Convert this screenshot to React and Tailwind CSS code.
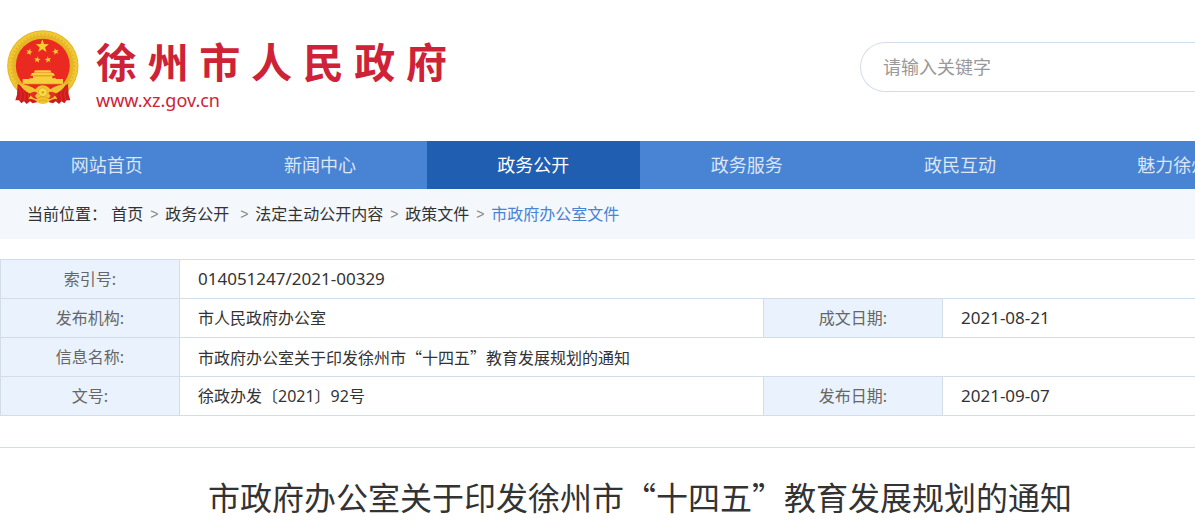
const navItems = ['网站首页', '新闻中心', '政务公开', '政务服务', '政民互动', '魅力徐州'];

function Star({ x, y, size, turn = 0 }) {
  return (
    <path
      d="M0 -10 L2.4 -3.2 L9.5 -3.1 L3.9 1.3 L5.9 8.1 L0 4.1 L-5.9 8.1 L-3.9 1.3 L-9.5 -3.1 L-2.4 -3.2 Z"
      transform={`translate(${x} ${y}) rotate(${turn}) scale(${size})`}
      fill="#f5cf2f"
    />
  );
}

function Emblem() {
  return (
    <svg viewBox="21 28 216 228" className="h-[76px] w-[72px] shrink-0" role="img" aria-label="国徽">
      <circle cx="128.5" cy="136" r="107" fill="#e6b526" />
      <circle cx="128.5" cy="136" r="98" fill="none" stroke="#f0c836" strokeWidth="12" />
      <circle cx="128.5" cy="136" r="95" fill="none" stroke="#e0ae22" strokeWidth="5" strokeDasharray="4 7" />
      <circle cx="128.5" cy="135" r="81" fill="#ea2a20" />
      <Star x={127} y={77} size={2.1} />
      <Star x={88} y={94} size={1.05} turn={15} />
      <Star x={167} y={93} size={1.05} turn={-15} />
      <Star x={112} y={117} size={1.05} turn={8} />
      <Star x={144} y={117} size={1.05} turn={-8} />
      <g fill="#f6d03c">
        <path d="M105 149 H151 L155 156 H101 Z" />
        <path d="M96 157 H160 L165 165 H91 Z" />
        <path d="M99 166 H157 V173 H168 V190 H88 V173 H99 Z" />
        <path d="M68 175 H189 V190 H68 Z" />
      </g>
      <path d="M66 190 H191 M103 166 H154" stroke="#d69b16" strokeWidth="2" />
      <path d="M53 190 L96 210 L112 244 L98 248 L90 242 L80 250 L72 242 L64 248 L57 239 L46 239 L51 222 Z" fill="#cf1a1e" />
      <path d="M204 190 L161 210 L145 244 L159 248 L167 242 L177 250 L185 242 L193 248 L200 239 L211 239 L206 222 Z" fill="#cf1a1e" />
      <path d="M57 200 L64 218 L60 239 M69 206 L75 222 L72 241 M84 213 L88 240 M200 200 L193 218 L197 239 M188 206 L182 222 L185 241 M173 213 L169 240" stroke="#e83a2e" strokeWidth="2" fill="none" />
      <path d="M58 190 Q88 192 106 206 Q115 194 128 194 Q141 194 151 206 Q169 192 199 190 Q184 214 162 220 L172 234 Q152 234 145 245 Q128 255 112 245 Q105 234 85 234 L95 220 Q73 214 58 190 Z" fill="#f0c32f" />
      <path d="M88 219 Q104 209 112 217 L105 226 L112 235 Q99 236 88 219 Z M169 219 Q153 209 145 217 L152 226 L145 235 Q158 236 169 219 Z" fill="#e03023" />
      <circle cx="128.5" cy="215" r="13" fill="#f9d94d" stroke="#d9a51f" strokeWidth="3" strokeDasharray="5 3" />
      <circle cx="128.5" cy="215" r="4" fill="#dba524" />
      <path d="M112 234 Q128 222 145 234 M116 243 Q128 233 141 243" stroke="#d39b1c" strokeWidth="2" fill="none" />
    </svg>
  );
}

function Separator() {
  return <span aria-hidden="true" className="w-2 font-['Liberation_Sans'] text-sm text-[#888888]">&gt;</span>;
}

const label = 'border border-[#d3dde8] bg-[#eaf3fd] text-center font-normal text-[#666666]';
const value = 'border border-[#d3dde8] px-[18px]';

export default function App() {
  return (
    <div className="overflow-hidden bg-white font-['Noto_Sans','Noto_Sans_CJK_SC',sans-serif] text-base text-[#333333]" lang="zh-CN">
      <div className="min-w-[1280px]">
        <header className="flex h-[141px] items-start justify-between pl-[7px]">
          <a href="#home" className="flex items-start gap-[17px] pt-[30px] text-[#ce2237]">
            <Emblem />
            <span className="flex flex-col pt-2">
              <span className="text-[41px] leading-[48px] font-bold whitespace-nowrap">徐 州 市 人 民 政 府</span>
              <span className="text-lg leading-7">www.xz.gov.cn</span>
            </span>
          </a>
          <form className="pt-[42px]">
            <input
              type="search"
              aria-label="请输入关键字"
              placeholder="请输入关键字"
              className="block h-[50px] w-[420px] rounded-l-full border border-r-0 border-[#d3dde8] px-[22px] text-lg outline-none placeholder:text-[#999999]"
            />
          </form>
        </header>

        <nav className="grid grid-cols-6 bg-[#4983d3] text-center text-lg leading-[48px]">
          {navItems.map((item) => (
            <a
              key={item}
              href="#nav"
              className={item === '政务公开' ? 'bg-[#205eb2] text-white' : 'text-[#dbe6f6]'}
            >
              {item}
            </a>
          ))}
        </nav>

        <nav aria-label="当前位置" className="flex h-[50px] items-center gap-[7px] bg-[#f4f8fd] pl-[27px]">
          <span>当前位置： <a href="#home">首页</a></span>
          <Separator />
          <a href="#open" className="pr-1">政务公开</a>
          <Separator />
          <a href="#content">法定主动公开内容</a>
          <Separator />
          <a href="#policy">政策文件</a>
          <Separator />
          <a href="#files" className="text-[#4983d3]">市政府办公室文件</a>
        </nav>

        <main className="pt-5">
          <table className="w-full table-fixed border-collapse leading-[38px]">
            <colgroup>
              <col className="w-[179px]" />
              <col />
              <col className="w-[179px]" />
              <col className="w-[337px]" />
            </colgroup>
            <tbody className="text-left">
              <tr>
                <th scope="row" className={label}>索引号:</th>
                <td colSpan={3} className={`${value} text-[17px]`}>014051247/2021-00329</td>
              </tr>
              <tr>
                <th scope="row" className={label}>发布机构:</th>
                <td className={value}>市人民政府办公室</td>
                <th scope="row" className={label}>成文日期:</th>
                <td className={`${value} text-[17px]`}>2021-08-21</td>
              </tr>
              <tr>
                <th scope="row" className={label}>信息名称:</th>
                <td colSpan={3} className={`${value} font-['Noto_Sans_CJK_SC',sans-serif]`}>市政府办公室关于印发徐州市“十四五”教育发展规划的通知</td>
              </tr>
              <tr>
                <th scope="row" className={label}>文号:</th>
                <td className={value}>徐政办发〔2021〕92号</td>
                <th scope="row" className={label}>发布日期:</th>
                <td className={`${value} text-[17px]`}>2021-09-07</td>
              </tr>
            </tbody>
          </table>
          <h1 className="mt-[31px] border-t border-[#d3dde8] pt-6 pb-2 text-center font-['Noto_Sans_CJK_SC',sans-serif] text-[32px] leading-[48px]">
            市政府办公室关于印发徐州市“十四五”教育发展规划的通知
          </h1>
        </main>
      </div>
    </div>
  );
}
